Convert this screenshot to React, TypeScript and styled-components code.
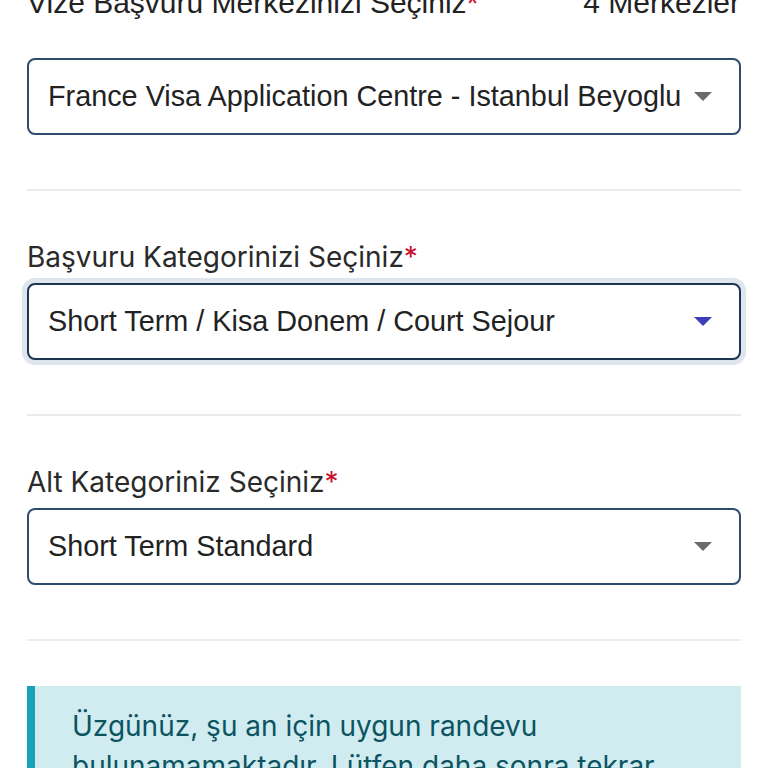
import { FC } from 'react'
import styled, { createGlobalStyle } from 'styled-components'

const GlobalStyle = createGlobalStyle`
  html, body {
    margin: 0;
    padding: 0;
    background: #fff;
    overflow: hidden;
  }
`

const Page = styled.div`
  padding: 0 27px;
  margin-top: -15px;
  font-family: Inter, "Liberation Sans", sans-serif;
  color: #212529;
`

const TopRow = styled.div`
  display: flex;
  justify-content: space-between;
  align-items: baseline;
  margin-bottom: 37px;
  font-family: "Liberation Sans", Arial, sans-serif;
  font-size: 30px;
  line-height: 36px;
  color: #222;
`

const Count = styled.span`
  padding-right: 1px;
`

const Label = styled.div`
  font-size: 28px;
  line-height: 36px;
  color: #2a2a2a;
  margin-bottom: 8px;
`

const Star = styled.span`
  color: #c8102e;
`

const Select = styled.div<{ $focused?: boolean }>`
  box-sizing: border-box;
  height: 77px;
  display: flex;
  align-items: center;
  justify-content: space-between;
  padding: 0 27px 0 19px;
  border: 2px solid ${p => (p.$focused ? '#1d3553' : '#2f4c6e')};
  border-radius: 8px;
  background: #fff;
  box-shadow: ${p => (p.$focused ? '0 0 0 5px #dee5ec' : 'none')};
  font-family: "Liberation Sans", Arial, sans-serif;
  font-size: 28.8px;
  color: #222;
`

const Value = styled.span`
  white-space: nowrap;
`

const Arrow = styled.span<{ $color: string }>`
  width: 0;
  height: 0;
  border-left: 9px solid transparent;
  border-right: 9px solid transparent;
  border-top: 9px solid ${p => p.$color};
`

const Divider = styled.hr<{ $after?: number }>`
  border: none;
  height: 2px;
  background: #ebebeb;
  margin: 54px 0 ${p => p.$after ?? 48}px;
`

const Alert = styled.div`
  background: #d1ecf1;
  border-left: 8px solid #17a2b8;
  padding: 20px 36px 20px 37px;
  font-size: 28px;
  line-height: 40px;
  color: #0c5460;
`

type Field = {
  label: string
  value: string
  focused?: boolean
}

const fields: Field[] = [
  { label: 'Başvuru Kategorinizi Seçiniz', value: 'Short Term / Kisa Donem / Court Sejour', focused: true },
  { label: 'Alt Kategoriniz Seçiniz', value: 'Short Term Standard' },
]

const App: FC = () => {
  return (
    <Page>
      <GlobalStyle />
      <TopRow>
        <span>Vize Başvuru Merkezinizi Seçiniz<Star>*</Star></span>
        <Count>4 Merkezler</Count>
      </TopRow>
      <Select>
        <Value>France Visa Application Centre - Istanbul Beyoglu</Value>
        <Arrow $color="#6b6b6b" />
      </Select>
      <Divider />
      {fields.map((f, i) => (
        <div key={f.label}>
          <Label>{f.label}<Star>*</Star></Label>
          <Select $focused={f.focused}>
            <Value>{f.value}</Value>
            <Arrow $color={f.focused ? '#3d3db8' : '#6b6b6b'} />
          </Select>
          <Divider $after={i === fields.length - 1 ? 45 : 48} />
        </div>
      ))}
      <Alert>
        Üzgünüz, şu an için uygun randevu bulunamamaktadır. Lütfen daha sonra tekrar deneyiniz.
      </Alert>
    </Page>
  )
}

export default App
